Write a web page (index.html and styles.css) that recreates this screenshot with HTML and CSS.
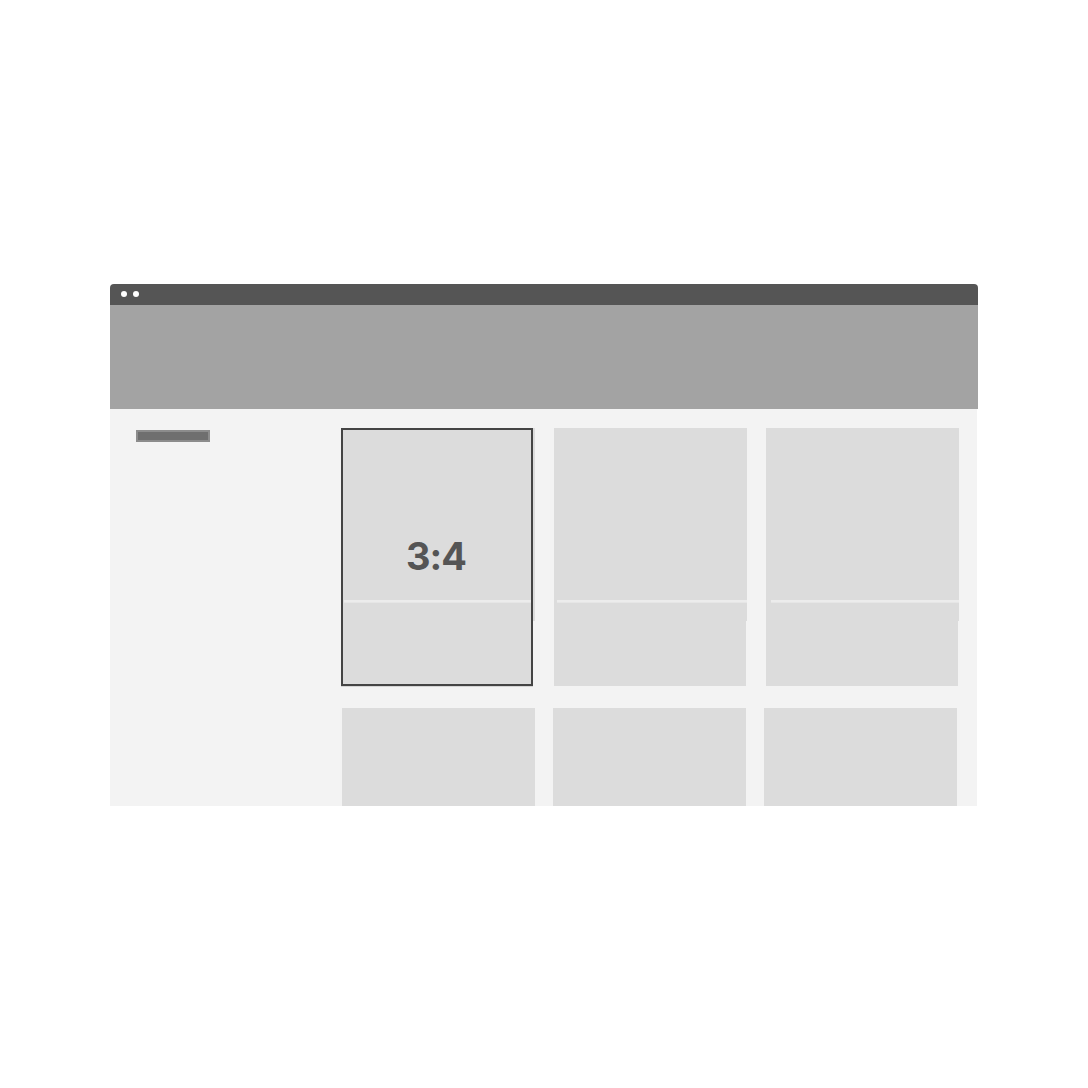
FILE: index.html
```html
<!DOCTYPE html>
<html>
<head>
<meta charset="utf-8">
<link rel="stylesheet" href="styles.css">
</head>
<body>
<div class="window">
  <div class="titlebar"><span class="dot"></span><span class="dot"></span></div>
  <div class="header"></div>
  <div class="content">
    <aside class="sidebar"><div class="sidebar-bar"></div></aside>
    <main class="main">
      <div class="row row-1">
        <div class="card card-selected">
          <div class="card-top wide"><div class="spacer"></div><div class="line"></div></div>
          <div class="card-bottom"></div>
          <div class="selection"><span class="ratio">3:4</span></div>
        </div>
        <div class="card card-2">
          <div class="card-top"><div class="spacer"></div><div class="line"></div></div>
          <div class="card-bottom"></div>
        </div>
        <div class="card card-3">
          <div class="card-top"><div class="spacer"></div><div class="line line-far"></div></div>
          <div class="card-bottom"></div>
        </div>
      </div>
      <div class="row row-2">
        <div class="tile"></div>
        <div class="tile"></div>
        <div class="tile"></div>
      </div>
    </main>
  </div>
</div>
</body>
</html>
```
FILE: styles.css
```css
* { box-sizing: border-box; }
html, body { margin: 0; padding: 0; background: #ffffff; }
body { font-family: Inter, "Open Sans", sans-serif; }

.window {
  margin: 284px 0 0 110px;
  width: 868px;
}
.titlebar {
  height: 21px;
  background: #555555;
  border-radius: 4px 4px 0 0;
  display: flex;
  align-items: center;
  padding-left: 10.5px;
  gap: 6.5px;
  padding-bottom: 1px;
}
.dot {
  width: 6px;
  height: 6px;
  border-radius: 50%;
  background: #ffffff;
}
.header {
  height: 104px;
  background: #a3a3a3;
}
.content {
  width: 867px;
  height: 397px;
  background: #f3f3f3;
  display: flex;
  overflow: hidden;
}
.sidebar {
  width: 231px;
  flex: none;
  padding: 21px 0 0 26px;
}
.sidebar-bar {
  width: 74px;
  height: 12px;
  background: #6f6f6f;
  border: 2px solid #8c8c8c;
}
.main {
  flex: 1;
  padding-top: 19px;
  display: flex;
  flex-direction: column;
}
.row { display: flex; }
.row-1 { height: 258px; }
.row-2 { margin-top: 22px; gap: 18px; padding-left: 1px; }

.card {
  width: 193px;
  display: flex;
  flex-direction: column;
  position: relative;
}
.card-2 { margin-left: 20px; }
.card-3 { margin-left: 19px; }
.card-top {
  width: 193px;
  height: 193px;
  background: #dcdcdc;
  display: flex;
  flex-direction: column;
}
.card-top.wide { width: 194px; }
.spacer { height: 172px; }
.line {
  height: 3px;
  margin-left: 3px;
  background: linear-gradient(#ececec 0 2px, #e6e6e6 2px);
}
.line-far { margin-left: 5px; }
.card-bottom {
  width: 192px;
  height: 65px;
  background: #dcdcdc;
}
.selection {
  position: absolute;
  left: 0;
  top: 0;
  width: 192px;
  height: 258px;
  border: 2px solid #444444;
  box-shadow: 0 1px 0 rgba(0,0,0,0.12);
  display: flex;
  align-items: center;
  justify-content: center;
}
.card-selected .line { margin-right: 4px; }
.ratio {
  font-family: Inter, "Open Sans", sans-serif;
  font-weight: 700;
  font-size: 38px;
  letter-spacing: -1px;
  color: #555555;
  line-height: 1;
  margin-left: -2px;
  margin-top: -3px;
}
.tile {
  width: 193px;
  height: 98px;
  background: #dcdcdc;
  flex: none;
}
```
